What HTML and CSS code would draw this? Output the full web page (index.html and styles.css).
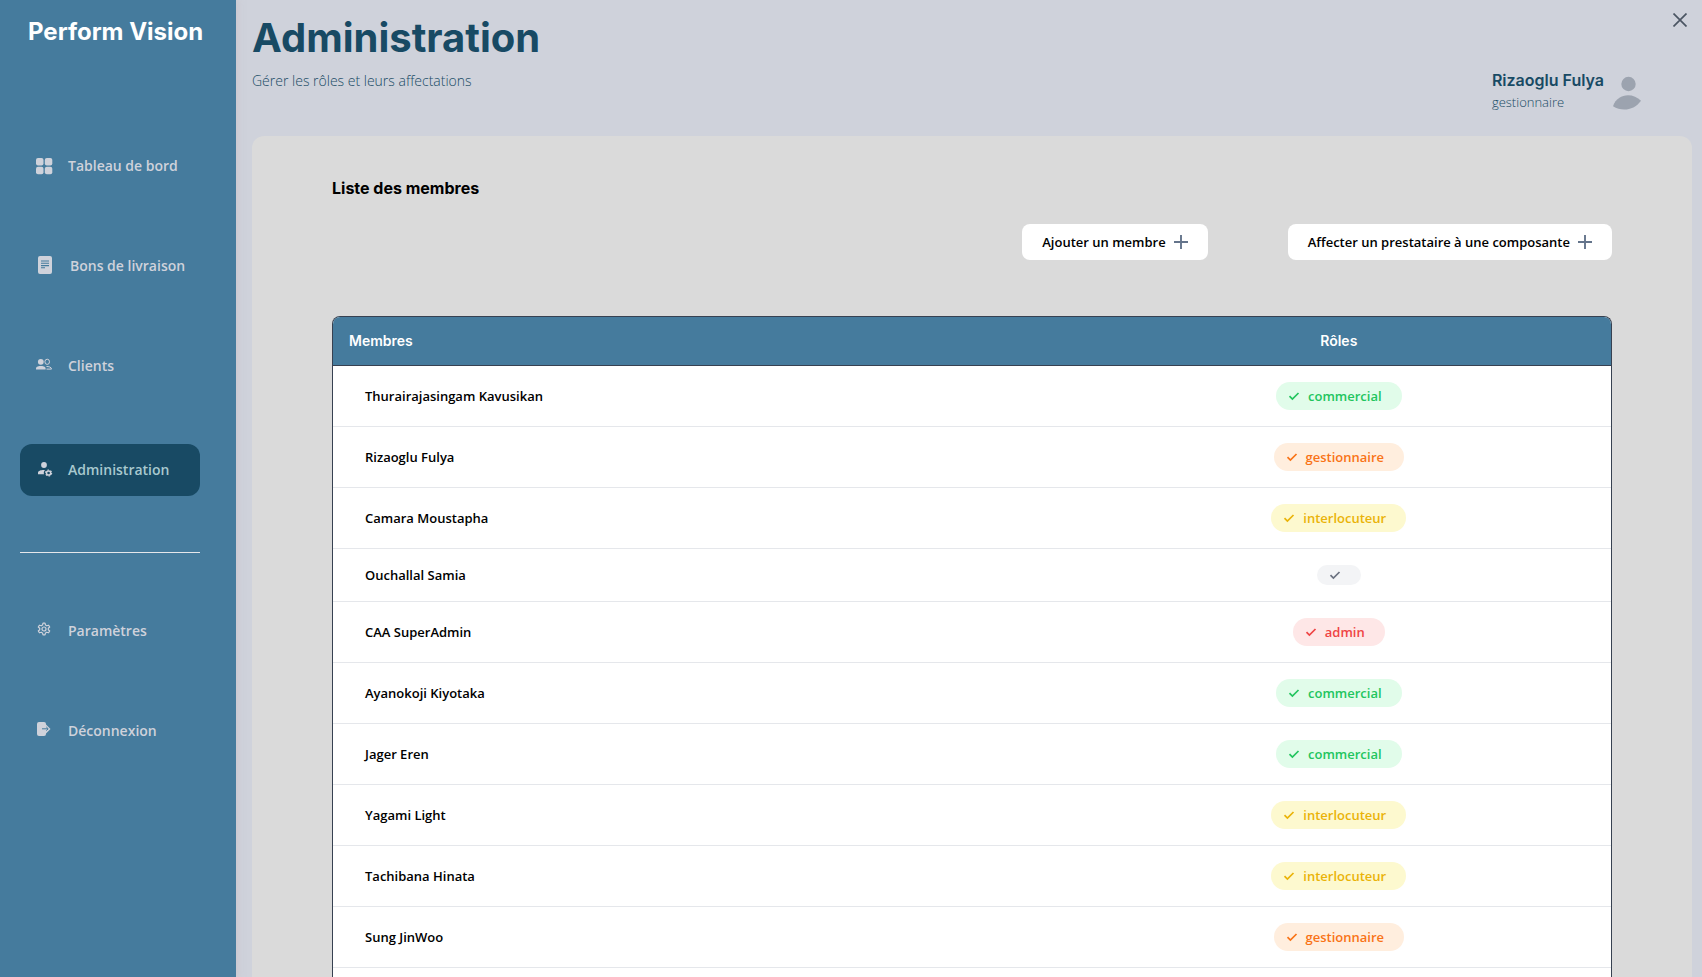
FILE: index.html
```html
<!DOCTYPE html>
<html lang="fr">
<head>
<meta charset="utf-8">
<meta name="viewport" content="width=device-width, initial-scale=1">
<title>Perform Vision – Administration</title>
<link rel="stylesheet" href="styles.css">
</head>
<body>
<svg class="defs" aria-hidden="true">
  <symbol id="check" viewBox="0 0 12 12"><path d="M1.5 6.2 4.4 9 10.5 3" fill="none" stroke="currentColor" stroke-width="1.7"/></symbol>
  <symbol id="plus" viewBox="0 0 14 14"><path d="M7 0v14M0 7h14" fill="none" stroke="currentColor" stroke-width="1.9"/></symbol>
</svg>
<div class="app">
  <aside class="sidebar">
    <div class="brand">Perform Vision</div>
    <nav class="nav">
      <a class="nav-item" href="#"><svg class="nav-icon" viewBox="0 0 20 20"><g fill="currentColor"><rect x="2" y="2" width="7.5" height="7.5" rx="2"/><rect x="10.8" y="2" width="7.5" height="7.5" rx="2"/><rect x="2" y="10.8" width="7.5" height="7.5" rx="2"/><rect x="10.8" y="10.8" width="7.5" height="7.5" rx="2"/></g></svg>Tableau de bord</a>
      <a class="nav-item" href="#"><svg class="nav-icon wide" viewBox="0 0 22 20"><rect x="4" y="0" width="14" height="18" rx="2" fill="currentColor"/><path d="M7 5h8M7 7.300h8M7 9.600h8M7 11.800h4" stroke="#457b9d" stroke-width="1.1"/></svg>Bons de livraison</a>
      <a class="nav-item" href="#"><svg class="nav-icon" viewBox="0 1 20 20"><circle cx="6.8" cy="6.8" r="2.9" fill="currentColor"/><path d="M2 14.5v-1c0-2 3-2.5 4.8-2.5s4.8.5 4.8 2.500v1z" fill="currentColor"/><path d="M13.200 4.200a2.300 2.600 0 1 1 0 5.200a2.300 2.600 0 0 1 0-5.200zM12.500 11.500c2 0 5 .5 5 2.600h-5" fill="none" stroke="currentColor"/></svg>Clients</a>
      <a class="nav-item active" href="#" aria-current="page"><svg class="nav-icon" viewBox="0 1 20 20"><circle cx="10" cy="6" r="2.900" fill="currentColor"/><path d="M4 15.200v-1.500c0-2.300 4-3 7-2.700-1.200 1.200-1.500 2.700-1 4.200z" fill="currentColor"/><circle cx="14.600" cy="14" r="2.100" fill="none" stroke="currentColor" stroke-width="1.500"/><circle cx="14.600" cy="14" r="3" fill="none" stroke="currentColor" stroke-width="1.200" stroke-dasharray="1.570 1.570"/></svg>Administration</a>
    </nav>
    <hr class="divider">
    <nav class="nav">
      <a class="nav-item" href="#"><svg class="nav-icon" viewBox="0 2 20 20"><g fill="none" stroke="currentColor" stroke-width="1.200" stroke-linejoin="round"><path d="M9 4.200h2l.5 1.900 1.200.7 1.900-.6 1.100 1.800-1.400 1.300v1.400l1.400 1.300-1.100 1.800-1.900-.6-1.200.7-.5 1.900H9l-.5-1.900-1.200-.7-1.900.6-1.100-1.800 1.400-1.300V9.300L4.300 8l1.100-1.800 1.900.6 1.200-.7z"/><circle cx="10" cy="10" r="2"/></g></svg>Paramètres</a>
      <a class="nav-item" href="#"><svg class="nav-icon" viewBox="0 2 20 20"><rect x="3" y="3" width="9" height="14" rx="2" fill="currentColor"/><path d="M12 7.200V5.500l4.500 4.500-4.500 4.500v-2z" fill="currentColor"/><path d="M8 9.800h6M12.300 8l1.900 1.800-1.900 1.800" fill="none" stroke="#457b9d"/></svg>Déconnexion</a>
    </nav>
  </aside>
  <main class="main">
    <header class="top">
      <div>
        <h1>Administration</h1>
        <p class="subtitle">Gérer les rôles et leurs affectations</p>
      </div>
      <button class="close" type="button" aria-label="Fermer"><svg viewBox="0 0 14 14"><path d="M.5.5l13 13M13.500.5l-13 13" stroke="currentColor" stroke-width="1.700"/></svg></button>
      <div class="user">
        <div><div class="user-name">Rizaoglu Fulya</div><div class="user-role">gestionnaire</div></div>
        <svg class="avatar" viewBox="0 0 28 34"><g fill="#9ca3af"><circle cx="15.500" cy="8" r="7.200"/><path d="M0 30.300C4.500 17 20 16.500 28 24.800 21 34.500 9 36 0 30.300z"/></g></svg>
      </div>
    </header>
    <section class="card">
      <h2>Liste des membres</h2>
      <div class="actions">
        <button class="action" type="button">Ajouter un membre<svg><use href="#plus"/></svg></button>
        <button class="action" type="button">Affecter un prestataire à une composante<svg><use href="#plus"/></svg></button>
      </div>
      <div class="table-box">
        <table>
          <thead><tr><th class="col-name" scope="col">Membres</th><th scope="col">Rôles</th></tr></thead>
          <tbody>
            <tr><td>Thurairajasingam Kavusikan</td><td><span class="pill green"><svg><use href="#check"/></svg><span>commercial</span></span></td></tr>
            <tr><td>Rizaoglu Fulya</td><td><span class="pill orange"><svg><use href="#check"/></svg><span>gestionnaire</span></span></td></tr>
            <tr><td>Camara Moustapha</td><td><span class="pill yellow"><svg><use href="#check"/></svg><span>interlocuteur</span></span></td></tr>
            <tr><td>Ouchallal Samia</td><td><span class="pill gray"><svg><use href="#check"/></svg><span></span></span></td></tr>
            <tr><td>CAA SuperAdmin</td><td><span class="pill red"><svg><use href="#check"/></svg><span>admin</span></span></td></tr>
            <tr><td>Ayanokoji Kiyotaka</td><td><span class="pill green"><svg><use href="#check"/></svg><span>commercial</span></span></td></tr>
            <tr><td>Jager Eren</td><td><span class="pill green"><svg><use href="#check"/></svg><span>commercial</span></span></td></tr>
            <tr><td>Yagami Light</td><td><span class="pill yellow"><svg><use href="#check"/></svg><span>interlocuteur</span></span></td></tr>
            <tr><td>Tachibana Hinata</td><td><span class="pill yellow"><svg><use href="#check"/></svg><span>interlocuteur</span></span></td></tr>
            <tr><td>Sung JinWoo</td><td><span class="pill orange"><svg><use href="#check"/></svg><span>gestionnaire</span></span></td></tr>
          </tbody>
        </table>
      </div>
    </section>
  </main>
</div>
</body>
</html>
```
FILE: styles.css
```css
* { box-sizing: border-box; }
body {
  margin: 0;
  background: #cfd2db;
  color: #000;
  font: 600 13px/20px "Open Sans", "Noto Sans", sans-serif;
}
h1, h2, p { margin: 0; }
button { border: 0; font: inherit; color: inherit; cursor: pointer; }
svg { display: block; flex: none; }
.defs { position: absolute; width: 0; height: 0; }
.app { display: flex; min-height: 100vh; }

.sidebar {
  width: 236px;
  flex: none;
  padding: 16px 36px 0 20px;
  background: #457b9d;
  color: #cfd2db;
  box-shadow: 2px 0 6px rgba(200, 190, 195, 0.5);
}
.brand {
  padding-left: 8px;
  margin-bottom: 92px;
  color: #fff;
  font: 700 24px/32px Inter, sans-serif;
  white-space: nowrap;
}
.nav { display: flex; flex-direction: column; gap: 48px; }
.nav-item {
  display: flex;
  align-items: center;
  gap: 14px;
  height: 52px;
  padding-left: 14px;
  border-radius: 12px;
  color: inherit;
  font-size: 14px;
  text-decoration: none;
  white-space: nowrap;
}
.nav-item.active { margin-top: 4px; background: #184a64; color: #a8c9cf; }
.nav-icon { width: 20px; height: 20px; color: #cfd2db; }
.nav-icon.wide { width: 22px; }
.divider { height: 1px; margin: 56px 0 52px; border: 0; background: #e5e7eb; }

.main {
  flex: 1;
  min-width: 0;
  display: flex;
  flex-direction: column;
  padding: 0 10px 0 16px;
}
.top {
  position: relative;
  display: flex;
  justify-content: space-between;
  min-height: 136px;
  padding: 14px 51px 0 0;
  color: #184a64;
}
h1 { font: 700 40px/48px Inter, sans-serif; }
.subtitle { margin-top: 8px; font-size: 14px; line-height: 22px; font-weight: 300; }
.close {
  position: absolute;
  top: 13px;
  right: 5px;
  width: 14px;
  height: 14px;
  padding: 0;
  background: none;
  color: #4b5563;
}
.user { display: flex; gap: 9px; padding-top: 54px; }
.user-name { font: 600 16px/24px Inter, sans-serif; }
.user-role { font-weight: 300; }
.avatar { width: 28px; height: 34px; margin-top: 8px; }

.card {
  flex: 1;
  display: flex;
  flex-direction: column;
  padding: 40px 80px 0;
  border-radius: 12px 12px 0 0;
  background: #dadada;
}
h2 { font: 700 16px/24px Inter, sans-serif; }
.actions { display: flex; justify-content: flex-end; gap: 80px; margin: 24px 0 56px; }
.action {
  display: flex;
  align-items: center;
  gap: 8px;
  height: 36px;
  padding: 0 20px;
  border-radius: 8px;
  background: #fff;
}
.action svg { width: 14px; height: 14px; color: #64748b; }

.table-box {
  flex: 1;
  overflow: hidden;
  border: 1px solid #374151;
  border-bottom: 0;
  border-radius: 8px 8px 0 0;
  background: #fff;
}
table { width: 100%; border-collapse: separate; border-spacing: 0; table-layout: fixed; }
th {
  height: 49px;
  padding: 0 16px;
  border-bottom: 1px solid #374151;
  background: #457b9d;
  color: #fff;
  font: 600 14px/20px Inter, sans-serif;
}
.col-name { width: 57.400%; text-align: left; }
td { padding: 16px 32px; border-bottom: 1px solid #e5e7eb; text-align: center; }
td:first-child { text-align: left; }
td:last-child { line-height: 0; }
.pill {
  display: inline-flex;
  align-items: center;
  gap: 8px;
  padding: 4px 12px;
  border-radius: 14px;
  line-height: 20px;
  vertical-align: top;
}
.pill svg { width: 12px; height: 12px; }
.pill span:not(:empty) { margin-right: 8px; }
.green { background: #e1fcea; color: #22c55e; }
.orange { background: #ffeede; color: #f97316; }
.yellow { background: #fdf9cf; color: #eab308; }
.gray { background: #f3f4f6; color: #6b7280; }
.red { background: #fee7e7; color: #ef4444; }
```
